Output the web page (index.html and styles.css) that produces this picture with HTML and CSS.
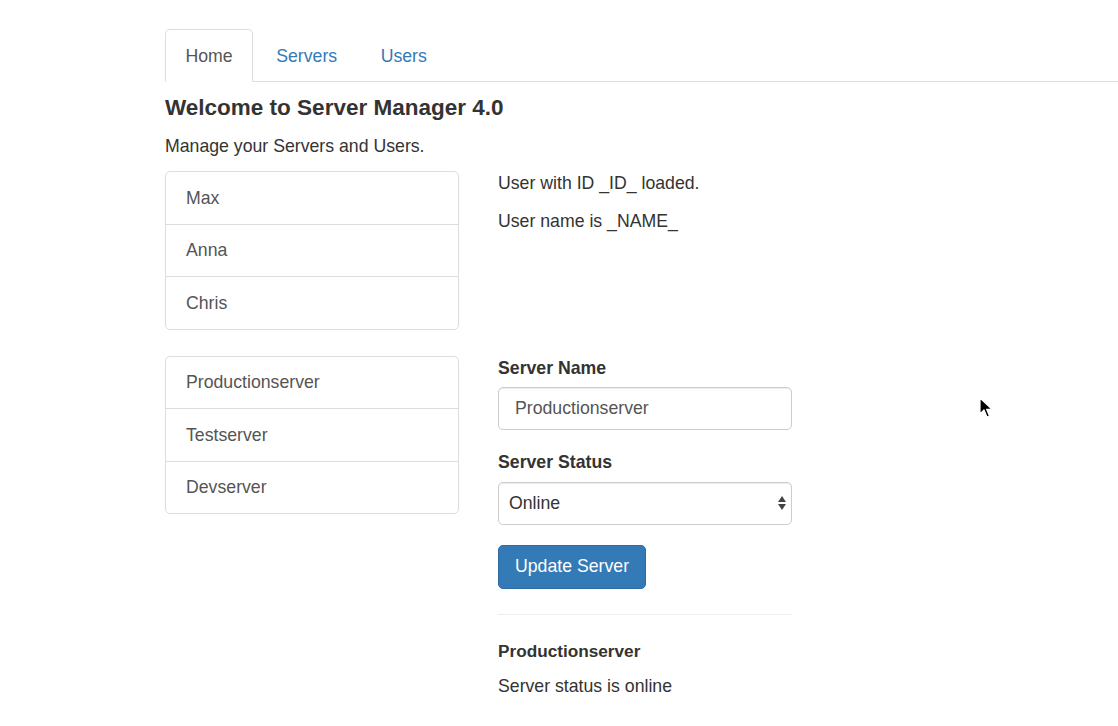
FILE: index.html
```html
<!DOCTYPE html>
<html>
<head>
<meta charset="utf-8">
<title>Server Manager</title>
<link rel="stylesheet" href="styles.css">
</head>
<body>
<div class="page">
  <ul class="tabs">
    <li class="tab active"><a>Home</a></li>
    <li class="tab"><a>Servers</a></li>
    <li class="tab"><a>Users</a></li>
  </ul>
  <h4 class="title">Welcome to Server Manager 4.0</h4>
  <p class="lead-p">Manage your Servers and Users.</p>

  <div class="row">
    <div class="col">
      <div class="list-group">
        <a class="item">Max</a>
        <a class="item">Anna</a>
        <a class="item">Chris</a>
      </div>
    </div>
    <div class="col">
      <p class="text">User with ID _ID_ loaded.</p>
      <p class="text">User name is _NAME_</p>
    </div>
  </div>

  <div class="row">
    <div class="col">
      <div class="list-group">
        <a class="item">Productionserver</a>
        <a class="item">Testserver</a>
        <a class="item">Devserver</a>
      </div>
    </div>
    <div class="col">
      <div class="form-group">
        <label class="label" for="name">Server Name</label>
        <input class="control" id="name" type="text" value="Productionserver">
      </div>
      <div class="form-group">
        <label class="label" for="status">Server Status</label>
        <select class="control select" id="status">
          <option>Online</option>
          <option>Offline</option>
        </select>
      </div>
      <button class="btn">Update Server</button>
      <hr class="rule">
      <h5 class="sub">Productionserver</h5>
      <p class="text">Server status is online</p>
    </div>
  </div>
</div>
<svg class="cursor" width="14" height="22" viewBox="0 0 14 22">
  <path d="M1 1 L1 17 L5 13 L8 20 L10.5 19 L7.6 12.3 L13 12.3 Z" fill="#000" stroke="#fff" stroke-width="1.2" stroke-linejoin="round"/>
</svg>
</body>
</html>
```

FILE: styles.css
```css
html, body {
  margin: 0;
  padding: 0;
  background: #fff;
}
body {
  font-family: "Liberation Sans", Arial, Helvetica, sans-serif;
  font-size: 17.7px;
  line-height: 25px;
  color: #333;
  position: relative;
  min-height: 726px;
  overflow: hidden;
}
.page {
  padding: 29px 0 0 165px;
}
.tabs {
  list-style: none;
  margin: 0;
  padding: 0;
  display: flex;
  border-bottom: 1px solid #ddd;
}
.tab {
  margin-right: 2.5px;
  margin-bottom: -1px;
}
.tab a {
  display: block;
  padding: 13.5px 19.5px 12.5px 19.5px;
  line-height: 25px;
  border: 1px solid transparent;
  border-radius: 5px 5px 0 0;
  color: #337ab7;
  cursor: pointer;
}
.tab.active a {
  color: #555;
  background: #fff;
  border-color: #ddd #ddd transparent #ddd;
}
.title {
  font-size: 22.5px;
  font-weight: bold;
  line-height: 25px;
  margin: 13px 0 13.5px 0;
}
.lead-p {
  margin: 0 0 12.5px 0;
}
.row {
  display: flex;
  gap: 39px;
}
.col {
  width: 294px;
}
.list-group {
  display: flex;
  flex-direction: column;
  margin-bottom: 26px;
}
.item {
  display: block;
  padding: 13.5px 20px 13px 20px;
  line-height: 25px;
  border: 1px solid #ddd;
  margin-bottom: -1px;
  background: #fff;
  color: #555;
}
.item:first-child {
  border-radius: 5px 5px 0 0;
}
.item:last-child {
  border-radius: 0 0 5px 5px;
  margin-bottom: 0;
}
.text {
  margin: 0 0 12.6px 0;
}
.form-group {
  margin-bottom: 20px;
}
.label {
  display: block;
  font-weight: bold;
  margin-bottom: 6.5px;
}
.control {
  display: block;
  box-sizing: border-box;
  width: 100%;
  height: 43px;
  padding: 8px 16px;
  font-family: inherit;
  font-size: 17.7px;
  color: #555;
  background: #fff;
  border: 1px solid #ccc;
  border-radius: 5px;
  box-shadow: inset 0 1px 1px rgba(0,0,0,.075);
}
.select {
  -webkit-appearance: none;
  appearance: none;
  padding-left: 10px;
  color: #333;
  background-image: url("data:image/svg+xml;utf8,<svg xmlns='http://www.w3.org/2000/svg' width='8' height='14' viewBox='0 0 8 14'><path d='M4 0 L8 6 L0 6 Z M0 8 L8 8 L4 14 Z' fill='%23444'/></svg>");
  background-repeat: no-repeat;
  background-position: right 5px center;
  background-size: 8px 14px;
}
.btn {
  display: inline-block;
  height: 44px;
  padding: 0 16px;
  font-family: inherit;
  font-size: 17.7px;
  color: #fff;
  background: #337ab7;
  border: 1px solid #2e6da4;
  border-radius: 5px;
  cursor: pointer;
}
.rule {
  margin: 25px 0 24px 0;
  border: 0;
  border-top: 1px solid #eee;
}
.sub {
  font-size: 17.2px;
  font-weight: bold;
  line-height: 25px;
  margin: 0 0 10px 0;
}
.cursor {
  position: absolute;
  left: 979px;
  top: 397px;
}
```
